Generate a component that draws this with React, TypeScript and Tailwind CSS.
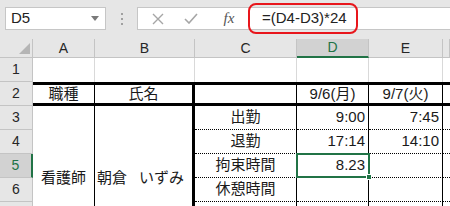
import React from "react";

const hdr = "flex items-center justify-center bg-[#e6e6e6] border-r border-b border-[#c4c4c4] text-[14px] text-[#262626]";
const dot = "border-b border-b-black [border-bottom-style:dotted]";

function CheckIcon() {
  return (
    <svg width="14" height="11" viewBox="0 0 14 11">
      <path d="M1 6 L5 10 L13 1" fill="none" stroke="#a6a6a6" strokeWidth="1.6" />
    </svg>
  );
}

function CrossIcon() {
  return (
    <svg width="12" height="12" viewBox="0 0 12 12">
      <path d="M1 1 L11 11 M11 1 L1 11" fill="none" stroke="#a6a6a6" strokeWidth="1.4" />
    </svg>
  );
}

export default function App() {
  const rows = [1, 2, 3, 4, 5, 6, 7, 8];
  const cRows = ["出勤", "退勤", "拘束時間", "休憩時間", "", ""];
  const dRows = ["9:00", "17:14", "8.23", "", "", ""];
  const eRows = ["7:45", "14:10", "", "", "", ""];

  return (
    <div className="w-[450px] h-[206px] overflow-hidden bg-white font-['Liberation_Sans','Noto_Sans_CJK_JP',sans-serif] text-[#1a1a1a]">
      {/* 数式バー */}
      <div className="relative h-[39px] bg-[#e6e6e6] flex items-start pt-[7px]">
        <div className="ml-[5px] w-[101px] h-[23px] bg-white border border-[#c6c6c6] flex items-center justify-between pl-[5px] pr-[6px]">
          <span className="text-[15px] text-[#222]">D5</span>
          <svg width="8" height="5" viewBox="0 0 8 5">
            <path d="M0 0 L8 0 L4 5 Z" fill="#7a7a7a" />
          </svg>
        </div>
        <div className="w-[31px] h-[23px] flex flex-col items-center justify-center gap-[3px]">
          <span className="w-[2px] h-[2px] bg-[#a0a0a0]" />
          <span className="w-[2px] h-[2px] bg-[#a0a0a0]" />
          <span className="w-[2px] h-[2px] bg-[#a0a0a0]" />
        </div>
        <div className="flex-1 h-[23px] bg-white border border-r-0 border-[#c6c6c6] flex items-center">
          <div className="w-[39px] flex justify-center"><CrossIcon /></div>
          <div className="w-[27px] flex justify-center"><CheckIcon /></div>
          <div className="w-[50px] flex justify-center">
            <span className="font-['Liberation_Serif',serif] italic text-[15px] text-[#555]">fx</span>
          </div>
          <span className="pl-[8px] text-[15px] text-[#222]">=(D4-D3)*24</span>
        </div>
        <div className="absolute left-[248px] top-[3px] w-[110px] h-[31px] rounded-[8px] border-2 border-[#e8161c]" />
      </div>

      {/* シート */}
      <div className="grid grid-cols-[33px_62px_100px_102px_72px_74px_1fr] grid-rows-[19px_repeat(8,24px)]">
        <div className="relative bg-[#e6e6e6] border-r border-b border-[#c4c4c4]">
          <svg className="absolute right-[2px] bottom-[3px]" width="11" height="11" viewBox="0 0 11 11">
            <path d="M11 0 L11 11 L0 11 Z" fill="#b5b5b5" />
          </svg>
        </div>
        <div className={hdr}>A</div>
        <div className={hdr}>B</div>
        <div className={hdr}>C</div>
        <div className="flex items-center justify-center bg-[#d2d2d2] border-r border-[#c4c4c4] border-b-2 border-b-[#217346] text-[14px] text-[#217346]">D</div>
        <div className={hdr}>E</div>
        <div className={hdr} />

        {/* 1行目 */}
        <div className={hdr} style={{ gridRow: 2, gridColumn: 1 }}>1</div>
        <div className="border-r border-[#d9d9d9]" />
        <div className="border-r border-[#d9d9d9]" />
        <div className="border-r border-[#d9d9d9]" />
        <div className="border-r border-[#d9d9d9]" />
        <div className="border-r border-[#d9d9d9]" />
        <div />

        {/* 2行目 */}
        <div className={hdr}>2</div>
        <div className="flex items-center justify-center border-y-[3px] border-black border-r text-[15px]">職種</div>
        <div className="flex items-center justify-center border-y-[3px] border-black border-r-[3px] text-[15px]">氏名</div>
        <div className="border-y-[3px] border-black border-r" />
        <div className="flex items-center justify-center border-y-[3px] border-black border-r text-[15px]">9/6(月)</div>
        <div className="flex items-center justify-center border-y-[3px] border-black border-r text-[15px]">9/7(火)</div>
        <div className="border-y-[3px] border-black" />

        {/* 行見出し 3〜8 */}
        {rows.slice(2).map((r) => (
          <div
            key={r}
            className={
              r === 5
                ? "flex items-center justify-center bg-[#d2d2d2] border-b border-[#c4c4c4] border-r-2 border-r-[#217346] text-[14px] text-[#217346]"
                : hdr
            }
            style={{ gridRow: r + 1, gridColumn: 1 }}
          >
            {r <= 6 ? r : ""}
          </div>
        ))}

        {/* 結合セル */}
        <div className="flex items-center justify-center border-r border-black text-[15px]" style={{ gridRow: "4 / span 6", gridColumn: 2 }}>
          看護師
        </div>
        <div className="flex items-center pl-[2px] border-r-[3px] border-black text-[15px]" style={{ gridRow: "4 / span 6", gridColumn: 3 }}>
          朝倉<span className="w-[12px]" />いずみ
        </div>

        {cRows.map((c, i) => (
          <React.Fragment key={i}>
            <div className={`flex items-center justify-center border-r border-r-black ${dot} text-[15px]`} style={{ gridRow: i + 4, gridColumn: 4 }}>
              {c}
            </div>
            <div className={`relative flex items-center justify-end pr-[3px] border-r border-r-black ${dot} text-[15px]`} style={{ gridRow: i + 4, gridColumn: 5 }}>
              {dRows[i]}
              {i === 2 && (
                <div className="absolute z-10 -left-[1px] -top-[1px] -right-[2px] -bottom-[1px] border-2 border-[#217346]">
                  <div className="absolute -right-[4px] -bottom-[4px] w-[6px] h-[6px] bg-[#217346] border border-white" />
                </div>
              )}
            </div>
            <div className={`flex items-center justify-end pr-[3px] border-r border-r-black ${dot} text-[15px]`} style={{ gridRow: i + 4, gridColumn: 6 }}>
              {eRows[i]}
            </div>
            <div className={dot} style={{ gridRow: i + 4, gridColumn: 7 }} />
          </React.Fragment>
        ))}
      </div>
    </div>
  );
}
